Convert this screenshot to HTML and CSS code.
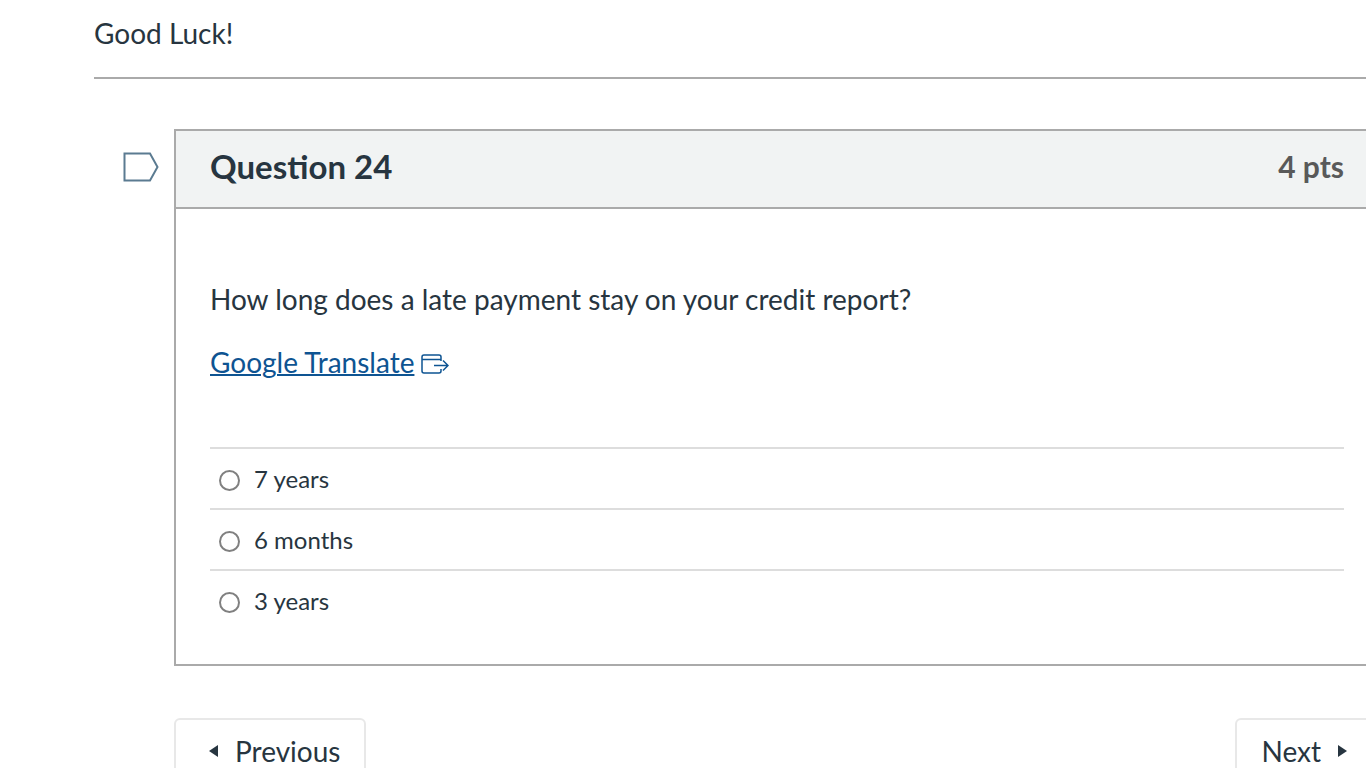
FILE: index.html
```
<!DOCTYPE html>
<html lang="en">
<head>
    <meta charset="UTF-8">
    <meta name="viewport" content="width=device-width, initial-scale=1.0">
    <title>Quiz</title>
    <link rel="stylesheet" href="styles.css">
</head>
<body>
    <main class="quiz">
        <p class="intro">Good Luck!</p>

        <form class="quiz-form">
            <div class="question-row">
                <button type="button" class="flag" aria-label="Flag question">
                    <svg width="36" height="30" viewBox="0 0 36 30" fill="none" stroke="#5b7b91" stroke-width="2">
                        <path d="M1.5 1.5H27L34.5 15L27 28.5H1.5Z"/>
                    </svg>
                </button>
                <section class="question">
                    <div class="question-header">
                        <h2 class="question-name">Question 24</h2>
                        <span class="points">4 pts</span>
                    </div>
                    <div class="question-body">
                        <p class="question-text">How long does a late payment stay on your credit report?</p>
                        <p class="question-text">
                            <a href="#" class="external"><span class="link-text">Google Translate</span><svg class="external-icon" width="28" height="20" viewBox="0 0 28 20" fill="none" stroke="currentColor" stroke-width="1.5">
                                <path d="M20 7V3Q20 1 18 1H3Q1 1 1 3V17Q1 19 3 19H18Q20 19 20 17V15M1 5.5H20M13 11.5H27M22 6.5L27 11.5L22 16.5"/>
                            </svg></a>
                        </p>
                        <div class="answers">
                            <label class="answer"><input type="radio" name="answer">7 years</label>
                            <label class="answer"><input type="radio" name="answer">6 months</label>
                            <label class="answer"><input type="radio" name="answer">3 years</label>
                        </div>
                    </div>
                </section>
            </div>

            <div class="nav-buttons">
                <button type="button" class="btn btn-previous">
                    <svg width="9" height="12" viewBox="0 0 9 12"><path d="M9 0V12L0 6Z" fill="currentColor"/></svg>
                    Previous
                </button>
                <button type="button" class="btn btn-next">
                    Next
                    <svg width="9" height="12" viewBox="0 0 9 12"><path d="M0 0V12L9 6Z" fill="currentColor"/></svg>
                </button>
            </div>
        </form>
    </main>
</body>
</html>
```

FILE: styles.css
```
* {
    box-sizing: border-box;
}
body {
    margin: 0;
    font-family: Lato, "Liberation Sans", sans-serif;
    font-size: 28px;
    line-height: 40px;
    color: #273540;
    background: #fff;
}
.quiz {
    height: 100vh;
    padding: 13px 0 0 94px;
    overflow: hidden;
}
.intro {
    margin: 0;
    padding-bottom: 24px;
    border-bottom: 2px solid #aaa;
}
.question-row {
    display: flex;
    align-items: flex-start;
    padding: 50px 0 0 29px;
}
.flag {
    display: flex;
    margin: 23px 15px 0 0;
    padding: 0;
    border: none;
    background: none;
    cursor: pointer;
}
.question {
    flex: 1;
    border: 2px solid #aaa;
    border-right: none;
}
.question-header {
    display: flex;
    align-items: center;
    justify-content: space-between;
    height: 78px;
    padding: 0 22px 6px 34px;
    background: #f1f3f3;
    border-bottom: 2px solid #aaa;
}
.question-name {
    margin: 0;
    font-size: 33px;
}
.points {
    font-size: 30px;
    font-weight: bold;
    color: #595959;
}
.question-body {
    padding: 70px 22px 34px 34px;
}
.question-text {
    margin: 0 0 23px;
}
.external {
    color: #0e5492;
    text-decoration: none;
}
.link-text {
    text-decoration: underline;
    text-decoration-thickness: 2px;
}
.external-icon {
    margin-left: 7px;
    vertical-align: -1px;
}
.answers {
    margin-top: 65px;
}
.answer {
    display: flex;
    align-items: center;
    height: 61px;
    padding-left: 9px;
    border-top: 2px solid #ddd;
    font-size: 24px;
}
.answer input {
    appearance: none;
    width: 21px;
    height: 21px;
    margin: 3px 14px 0 0;
    border: 2px solid #808080;
    border-radius: 50%;
    background: #fff;
}
.answer input:checked {
    background: #273540;
    box-shadow: inset 0 0 0 3px #fff;
}
.nav-buttons {
    display: flex;
    justify-content: space-between;
    margin: 52px -16px 0 80px;
}
.btn {
    display: flex;
    align-items: center;
    gap: 17px;
    height: 70px;
    padding: 0 24px 4px;
    border: 2px solid #e8e8e8;
    border-radius: 6px;
    background: #fff;
    color: #273540;
    font: inherit;
    cursor: pointer;
}
.btn-previous {
    padding-left: 33px;
}
.btn-next {
    padding-right: 33px;
}
```
